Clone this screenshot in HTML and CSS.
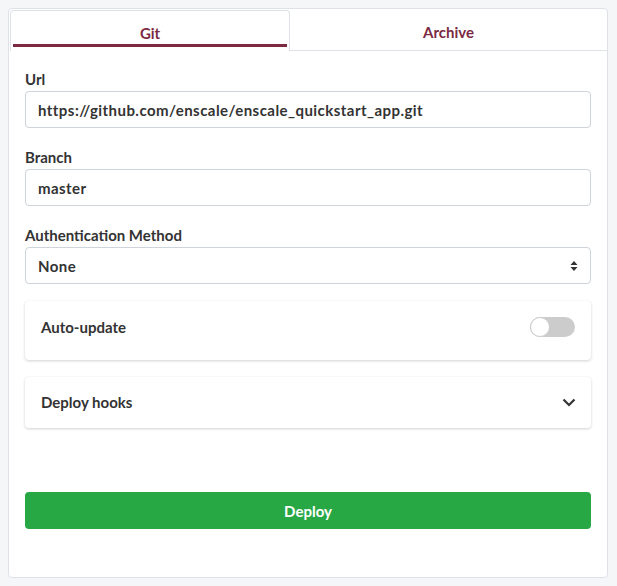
FILE: index.html
```html
<!DOCTYPE html>
<html>
<head>
<meta charset="utf-8">
<link rel="stylesheet" href="styles.css">
</head>
<body>
<div class="card">
  <div class="tabs">
    <div class="tab active"><span>Git</span></div>
    <div class="tab"><span>Archive</span></div>
  </div>
  <div class="content">
    <div class="group">
      <label class="label">Url</label>
      <div class="input">https://github.com/enscale/enscale_quickstart_app.git</div>
    </div>
    <div class="group">
      <label class="label">Branch</label>
      <div class="input">master</div>
    </div>
    <div class="group last">
      <label class="label">Authentication Method</label>
      <div class="input select">None
        <svg class="updown" width="8" height="12" viewBox="0 0 8 12"><path d="M4 1 L7.5 5 H0.5 Z M4 11 L7.5 7 H0.5 Z" fill="#333"/></svg>
      </div>
    </div>
    <div class="panel auto">
      <span class="ptitle">Auto-update</span>
      <span class="toggle"><span class="knob"></span></span>
    </div>
    <div class="panel hooks">
      <span class="ptitle">Deploy hooks</span>
      <svg class="chev" width="14" height="9" viewBox="0 0 14 9"><path d="M1.5 1.5 L7 7 L12.5 1.5" fill="none" stroke="#333" stroke-width="2.2"/></svg>
    </div>
    <button class="deploy">Deploy</button>
  </div>
</div>
</body>
</html>
```
FILE: styles.css
```css
* { box-sizing: border-box; }
html, body { margin: 0; }
body {
  background: #f5f6f8;
  padding: 8px;
  font-family: Lato, "Open Sans", sans-serif;
  color: #333;
}
.card {
  width: 600px;
  height: 570px;
  background: #fff;
  border: 1px solid #dee2e6;
  border-radius: 4px;
  padding-top: 1px;
}
.tabs {
  display: flex;
  height: 41px;
  padding-left: 1px;
}
.tab {
  height: 41px;
  display: flex;
  justify-content: center;
  align-items: center;
  font-weight: 700;
  font-size: 15px;
  color: #7b2a42;
  flex: 1;
  border-bottom: 1px solid #dee2e6;
  padding-top: 3px;
}
.tab.active {
  flex: 0 0 280px;
  border: 1px solid #dee2e6;
  border-bottom: none;
  border-radius: 4px 4px 0 0;
  position: relative;
}
.tab.active::after {
  content: "";
  position: absolute;
  left: 2px;
  right: 2px;
  top: 33px;
  height: 3px;
  background: #7b2a42;
}
.content {
  padding: 17px 16px 0 16px;
}
.group { margin-bottom: 18px; }
.group.last { margin-bottom: 17px; }
.label {
  display: block;
  font-size: 15px;
  font-weight: 700;
  line-height: 22px;
  margin-bottom: 1px;
}
.input {
  height: 37px;
  border: 1px solid #ced4da;
  border-radius: 4px;
  display: flex;
  align-items: center;
  padding: 0 12px;
  font-size: 15px;
  font-weight: 700;
  letter-spacing: 0.45px;
  color: #333;
}
.select { justify-content: space-between; }
.panel {
  border-radius: 4px;
  box-shadow: 0 1px 3px rgba(0,0,0,0.18), 0 0 1px rgba(0,0,0,0.06);
  display: flex;
  justify-content: space-between;
  padding: 0 16px;
  margin-bottom: 17px;
  font-size: 15px;
  font-weight: 700;
}
.panel.auto { height: 59px; padding-top: 16px; }
.panel.auto .ptitle { padding-top: 1px; }
.panel.hooks { height: 51px; align-items: center; padding-bottom: 1px; }
.toggle {
  width: 45px;
  height: 20px;
  border-radius: 10px;
  background: #ccc;
  position: relative;
}
.knob {
  position: absolute;
  left: 0;
  top: 0;
  width: 20px;
  height: 20px;
  border-radius: 50%;
  background: #fff;
  border: 1px solid #ccc;
}
.chev { margin-right: -1px; }
.deploy {
  display: block;
  width: 100%;
  height: 37px;
  margin-top: 64px;
  border: none;
  border-radius: 4px;
  background: #28a745;
  color: #fff;
  font-family: inherit;
  font-size: 15px;
  font-weight: 700;
}
```
